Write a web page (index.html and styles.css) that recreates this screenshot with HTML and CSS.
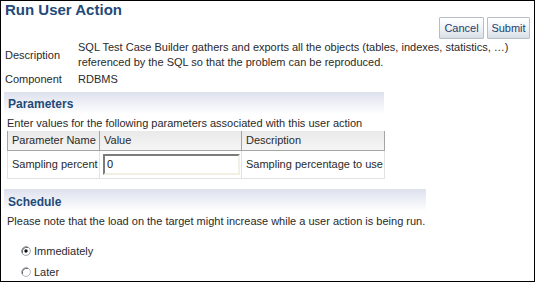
FILE: index.html
```html
<!DOCTYPE html>
<html>
  <head>
    <meta charset="utf-8">
    <title>Run User Action</title>
    <link rel="stylesheet" href="styles.css">
  </head>
  <body>
    <div class="page">
      <h1 class="title">Run User Action</h1>

      <div class="actions">
        <button class="btn btn--cancel" type="button">Cancel</button>
        <button class="btn btn--submit" type="button">Submit</button>
      </div>

      <div class="info">
        <div class="info__row">
          <div class="info__label">Description</div>
          <div class="info__value">SQL Test Case Builder gathers and exports all the objects (tables, indexes, statistics, &hellip;) referenced by the SQL so that the problem can be reproduced.</div>
        </div>
        <div class="info__row">
          <div class="info__label">Component</div>
          <div class="info__value">RDBMS</div>
        </div>
      </div>

      <h2 class="band band--params">Parameters</h2>
      <p class="hint hint--params">Enter values for the following parameters associated with this user action</p>

      <table class="params">
        <thead>
          <tr>
            <th class="params__name">Parameter Name</th>
            <th class="params__value">Value</th>
            <th class="params__desc">Description</th>
          </tr>
        </thead>
        <tbody>
          <tr>
            <td>Sampling percent</td>
            <td class="params__input"><input class="field" type="text" value="0"></td>
            <td>Sampling percentage to use</td>
          </tr>
        </tbody>
      </table>

      <h2 class="band band--schedule">Schedule</h2>
      <p class="hint hint--schedule">Please note that the load on the target might increase while a user action is being run.</p>

      <div class="choices">
        <label class="choice">
          <svg class="radio" width="10" height="10" viewBox="0 0 10 10">
            <circle cx="5" cy="5" r="4.4" fill="#fff" stroke="#9aa0a6"/>
            <path d="M1.4 6.8 A4.4 4.4 0 0 1 6.8 1.4" fill="none" stroke="#4f5358"/>
            <circle cx="5" cy="5" r="1.7" fill="#111"/>
          </svg>
          Immediately
        </label>
        <label class="choice">
          <svg class="radio" width="10" height="10" viewBox="0 0 10 10">
            <circle cx="5" cy="5" r="4.4" fill="#fff" stroke="#b0b5ba"/>
            <path d="M1.4 6.8 A4.4 4.4 0 0 1 6.8 1.4" fill="none" stroke="#4f5358"/>
          </svg>
          Later
        </label>
      </div>
    </div>
  </body>
</html>
```

FILE: styles.css
```css
/* Base */
* {
  box-sizing: border-box;
}

html {
  font-family: "Liberation Sans", Tahoma, sans-serif;
}

body {
  background: #fff;
  color: #2a2a2a;
  font-size: 11px;
  line-height: 15px;
  margin: 0;
}

p {
  margin: 0;
}

/* Page */
.page {
  border: 1px solid #000;
  height: 282px;
  overflow: hidden;
  padding: 0 4px 0 3px;
  width: 535px;
}

.title {
  color: #1f4a78;
  font-size: 15px;
  font-weight: bold;
  line-height: 17px;
  margin: 0 0 0 1px;
}

/* Buttons */
.actions {
  display: flex;
  gap: 3px;
  justify-content: flex-end;
  margin-top: -1px;
}

.btn {
  background: linear-gradient(#ffffff, #eef1f5 55%, #d9dfe7);
  border: 1px solid #b7bec8;
  border-radius: 1px;
  color: #1c3f6e;
  font-family: inherit;
  font-size: 11px;
  height: 22px;
  padding: 0;
}

.btn--cancel {
  width: 45px;
}

.btn--submit {
  width: 43px;
}

/* Description rows */
.info {
  display: flex;
  flex-direction: column;
  gap: 2px;
  margin: 1px 0 0 1px;
}

.info__row {
  align-items: center;
  display: flex;
}

.info__label {
  flex: 0 0 73px;
}

/* Section bands */
.band {
  background: linear-gradient(#dde1ed, #f3f4f9 65%, #ffffff);
  color: #1f4a78;
  font-size: 12px;
  font-weight: bold;
  height: 22px;
  line-height: 18px;
  margin: 0;
  padding: 3px 0 0 4px;
}

.band--params {
  margin-top: 5px;
  width: 380px;
}

.band--schedule {
  margin-top: 10px;
  padding-top: 4px;
  width: 422px;
}

.hint {
  margin-left: 3px;
}

.hint--params {
  margin-top: 2px;
}

.hint--schedule {
  margin-top: 3px;
}

/* Parameters table */
.params {
  border-collapse: collapse;
  margin-left: 3px;
  white-space: nowrap;
}

.params th {
  background: linear-gradient(#e9e9e9, #f5f5f5);
  border-bottom: 1px solid #a4a4a4;
  border-left: 1px solid #a4a4a4;
  font-weight: normal;
  height: 19px;
  padding: 0 3px 0 4px;
  text-align: left;
}

.params th:last-child {
  border-right: 1px solid #a4a4a4;
}

.params td {
  border: 1px solid #e2e2e2;
  border-top: 0;
  height: 28px;
  padding: 0 1px 0 4px;
}

.params__name {
  width: 92px;
}

.params__value {
  width: 142px;
}

.params .params__input {
  padding: 0 1px 0 3px;
}

.field {
  border: 2px solid;
  border-color: #7c7c7c #f2f0e4 #f2f0e4 #7c7c7c;
  color: #111;
  display: block;
  font-family: inherit;
  font-size: 11px;
  height: 21px;
  padding: 0 2px;
  width: 137px;
}

/* Schedule choices */
.choices {
  display: flex;
  flex-direction: column;
  gap: 6px;
  margin: 15px 0 0 17px;
}

.choice {
  align-items: center;
  display: flex;
  gap: 3px;
  line-height: 15px;
}
```
